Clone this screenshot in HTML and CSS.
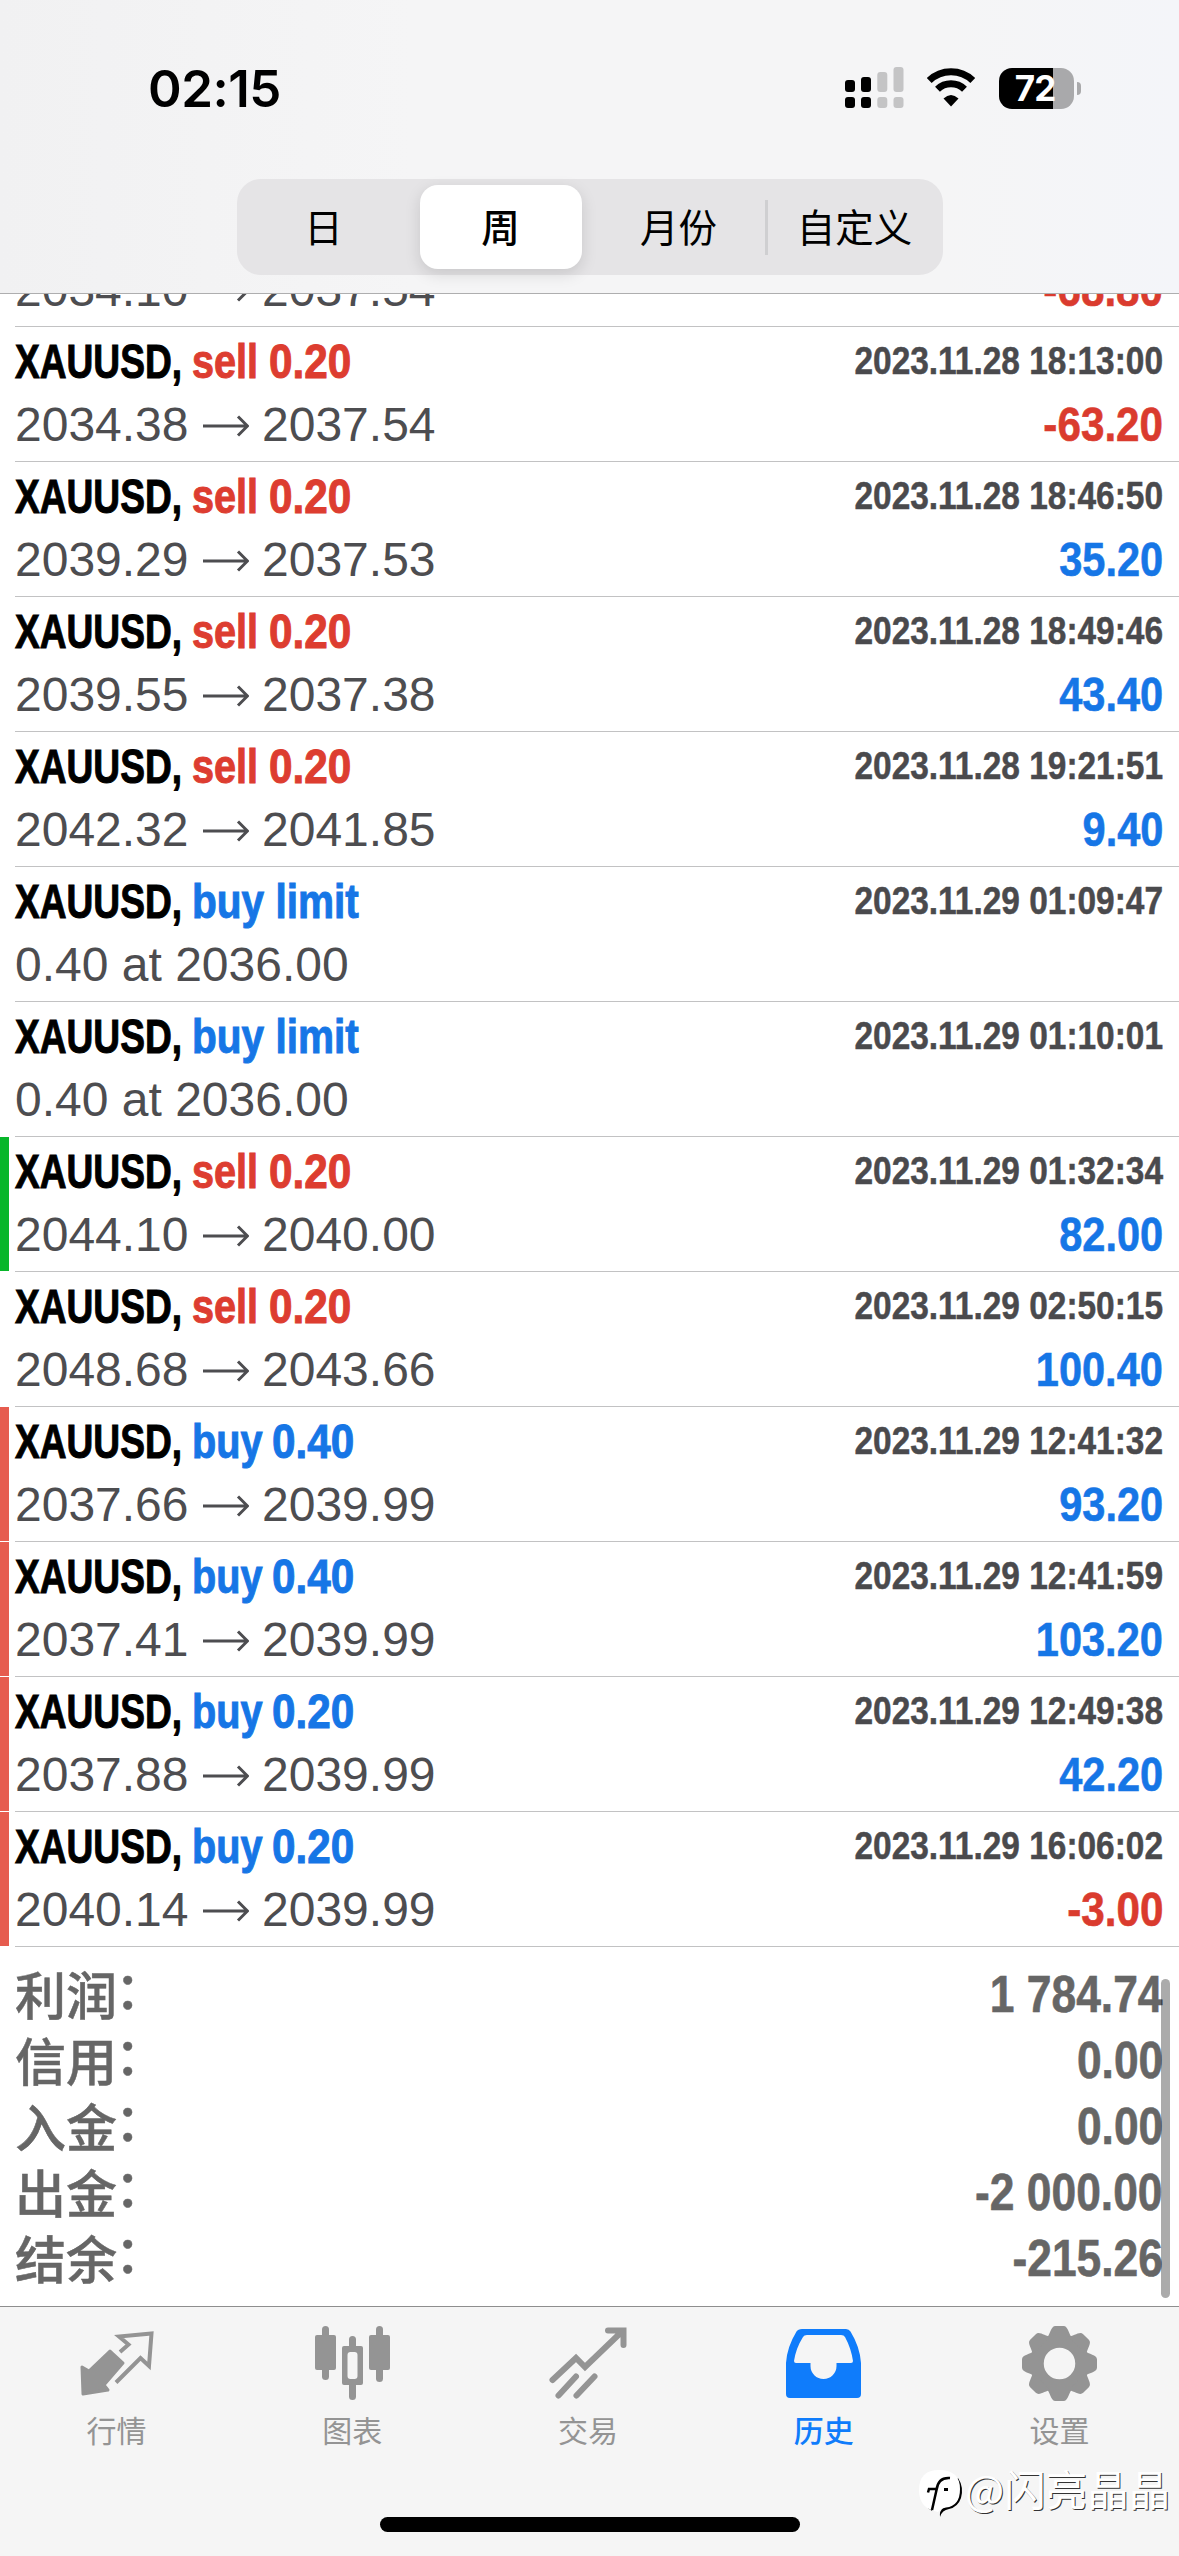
FILE: index.html
```html
<!DOCTYPE html>
<html lang="zh-CN">
<head>
<meta charset="utf-8">
<title>历史</title>
<link rel="stylesheet" href="styles.css">
</head>
<body>
<div class="screen">
  <header class="header">
    <div class="status">
      <span class="clock">02:15</span>
      <span class="status-icons">
        <svg class="signal" width="59" height="42" viewBox="0 0 59 42">
          <g fill="#000"><rect x="0" y="13" width="10" height="12" rx="3"/><rect x="16" y="10" width="10" height="15" rx="3"/><rect x="0" y="30" width="10" height="11" rx="3"/><rect x="16" y="30" width="10" height="11" rx="3"/></g>
          <g fill="#c4c4c5"><rect x="32.300" y="5" width="10" height="20" rx="3"/><rect x="48.500" y="0" width="10" height="25" rx="3"/><rect x="32.300" y="30" width="10" height="11" rx="3"/><rect x="48.500" y="30" width="10" height="11" rx="3"/></g>
        </svg>
        <svg class="wifi" width="50" height="42" viewBox="0 0 50 42">
          <path d="M3.200 13.500A31.500 31.500 0 0 1 46.800 13.500M11.500 22.300A19.500 19.500 0 0 1 38.500 22.300" fill="none" stroke="#000" stroke-width="7"/>
          <path d="M25 39.500L17.500 31.500Q25 24.500 32.500 31.500Z"/>
        </svg>
        <span class="battery"><span class="battery-level">72</span></span><span class="battery-nub"></span>
      </span>
    </div>
    <nav class="segments">
      <span class="segment day">日</span>
      <span class="segment selected">周</span>
      <span class="segment month">月份</span>
      <span class="segment divided">自定义</span>
    </nav>
  </header>

  <main class="history">
    <section class="deal partial"><i class="mark"></i><div class="info"><span class="prices">2034.10<svg class="arrow" viewBox="0 0 46 22"><path d="M0 11H44M35 1.500L44.500 11L35 20.500"/></svg>2037.54</span><span class="profit loss">-68.80</span></div></section>
    <section class="deal"><i class="mark"></i><div class="info"><span class="title"><b class="symbol">XAUUSD,</b><b class="side sell">sell</b><b class="volume sell">0.20</b></span><time>2023.11.28 18:13:00</time><span class="prices">2034.38<svg class="arrow" viewBox="0 0 46 22"><path d="M0 11H44M35 1.500L44.500 11L35 20.500"/></svg>2037.54</span><span class="profit loss">-63.20</span></div></section>
    <section class="deal"><i class="mark"></i><div class="info"><span class="title"><b class="symbol">XAUUSD,</b><b class="side sell">sell</b><b class="volume sell">0.20</b></span><time>2023.11.28 18:46:50</time><span class="prices">2039.29<svg class="arrow" viewBox="0 0 46 22"><path d="M0 11H44M35 1.500L44.500 11L35 20.500"/></svg>2037.53</span><span class="profit">35.20</span></div></section>
    <section class="deal"><i class="mark"></i><div class="info"><span class="title"><b class="symbol">XAUUSD,</b><b class="side sell">sell</b><b class="volume sell">0.20</b></span><time>2023.11.28 18:49:46</time><span class="prices">2039.55<svg class="arrow" viewBox="0 0 46 22"><path d="M0 11H44M35 1.500L44.500 11L35 20.500"/></svg>2037.38</span><span class="profit">43.40</span></div></section>
    <section class="deal"><i class="mark"></i><div class="info"><span class="title"><b class="symbol">XAUUSD,</b><b class="side sell">sell</b><b class="volume sell">0.20</b></span><time>2023.11.28 19:21:51</time><span class="prices">2042.32<svg class="arrow" viewBox="0 0 46 22"><path d="M0 11H44M35 1.500L44.500 11L35 20.500"/></svg>2041.85</span><span class="profit">9.40</span></div></section>
    <section class="deal"><i class="mark"></i><div class="info"><span class="title"><b class="symbol">XAUUSD,</b><b class="side pending buy">buy limit</b></span><time>2023.11.29 01:09:47</time><span class="prices">0.40 at 2036.00</span></div></section>
    <section class="deal"><i class="mark"></i><div class="info"><span class="title"><b class="symbol">XAUUSD,</b><b class="side pending buy">buy limit</b></span><time>2023.11.29 01:10:01</time><span class="prices">0.40 at 2036.00</span></div></section>
    <section class="deal"><i class="mark take"></i><div class="info"><span class="title"><b class="symbol">XAUUSD,</b><b class="side sell">sell</b><b class="volume sell">0.20</b></span><time>2023.11.29 01:32:34</time><span class="prices">2044.10<svg class="arrow" viewBox="0 0 46 22"><path d="M0 11H44M35 1.500L44.500 11L35 20.500"/></svg>2040.00</span><span class="profit">82.00</span></div></section>
    <section class="deal"><i class="mark"></i><div class="info"><span class="title"><b class="symbol">XAUUSD,</b><b class="side sell">sell</b><b class="volume sell">0.20</b></span><time>2023.11.29 02:50:15</time><span class="prices">2048.68<svg class="arrow" viewBox="0 0 46 22"><path d="M0 11H44M35 1.500L44.500 11L35 20.500"/></svg>2043.66</span><span class="profit">100.40</span></div></section>
    <section class="deal"><i class="mark stop"></i><div class="info"><span class="title"><b class="symbol">XAUUSD,</b><b class="side buy">buy</b><b class="volume buy">0.40</b></span><time>2023.11.29 12:41:32</time><span class="prices">2037.66<svg class="arrow" viewBox="0 0 46 22"><path d="M0 11H44M35 1.500L44.500 11L35 20.500"/></svg>2039.99</span><span class="profit">93.20</span></div></section>
    <section class="deal"><i class="mark stop"></i><div class="info"><span class="title"><b class="symbol">XAUUSD,</b><b class="side buy">buy</b><b class="volume buy">0.40</b></span><time>2023.11.29 12:41:59</time><span class="prices">2037.41<svg class="arrow" viewBox="0 0 46 22"><path d="M0 11H44M35 1.500L44.500 11L35 20.500"/></svg>2039.99</span><span class="profit">103.20</span></div></section>
    <section class="deal"><i class="mark stop"></i><div class="info"><span class="title"><b class="symbol">XAUUSD,</b><b class="side buy">buy</b><b class="volume buy">0.20</b></span><time>2023.11.29 12:49:38</time><span class="prices">2037.88<svg class="arrow" viewBox="0 0 46 22"><path d="M0 11H44M35 1.500L44.500 11L35 20.500"/></svg>2039.99</span><span class="profit">42.20</span></div></section>
    <section class="deal"><i class="mark stop"></i><div class="info"><span class="title"><b class="symbol">XAUUSD,</b><b class="side buy">buy</b><b class="volume buy">0.20</b></span><time>2023.11.29 16:06:02</time><span class="prices">2040.14<svg class="arrow" viewBox="0 0 46 22"><path d="M0 11H44M35 1.500L44.500 11L35 20.500"/></svg>2039.99</span><span class="profit loss">-3.00</span></div></section>

    <dl class="totals">
      <dt>利润<span class="colon">：</span></dt><dd>1 784.74</dd>
      <dt>信用<span class="colon">：</span></dt><dd>0.00</dd>
      <dt>入金<span class="colon">：</span></dt><dd>0.00</dd>
      <dt>出金<span class="colon">：</span></dt><dd>-2 000.00</dd>
      <dt>结余<span class="colon">：</span></dt><dd>-215.26</dd>
    </dl>
    <i class="scrollbar"></i>
  </main>

  <footer class="tabbar">
    <nav class="tabs">
      <a class="tab">
        <svg viewBox="0 0 84 84"><path d="M6 47L13 51L34 31L47 43L28 65L32 70L7 74Z" fill="currentColor" stroke="currentColor" stroke-width="3" stroke-linejoin="round"/><path d="M44 32L52.500 24.500L43 16.500L75.500 13.500L73 46L64.500 38L40 62.500" fill="none" stroke="currentColor" stroke-width="4"/></svg>
        <span>行情</span>
      </a>
      <a class="tab">
        <svg viewBox="0 0 84 84" fill="currentColor"><rect x="3" y="15" width="21" height="35" rx="2"/><rect x="10" y="6" width="7" height="54" rx="3.500"/><rect x="57" y="15" width="21" height="35" rx="2"/><rect x="64" y="6" width="7" height="56" rx="3.500"/><path d="M37 26V19.500a3.500 3.500 0 0 1 7 0V26H49a2 2 0 0 1 2 2V63a2 2 0 0 1-2 2H44V76.500a3.500 3.500 0 0 1-7 0V65H32a2 2 0 0 1-2-2V28a2 2 0 0 1 2-2ZM38.500 32a3 3 0 0 0-3 3V56a3 3 0 0 0 3 3h4a3 3 0 0 0 3-3V35a3 3 0 0 0-3-3Z" fill-rule="evenodd"/></svg>
        <span>图表</span>
      </a>
      <a class="tab">
        <svg viewBox="0 0 84 84"><path d="M6 60L29.500 38L38.500 47L76 11M61.500 10.500H77V25M29.500 56.500L12 75.500M48 56.500L30 75.500" transform="translate(-.5 0)" fill="none" stroke="currentColor" stroke-width="6" stroke-linecap="round"/></svg>
        <span>交易</span>
      </a>
      <a class="tab active">
        <svg viewBox="0 0 84 84" fill="currentColor"><path fill-rule="evenodd" d="M19 9H63Q66 9 67.500 11.500Q77 27 78 43V74Q78 78 74 78H7Q3 78 3 74V43Q4 27 13.500 11.500Q15 9 19 9ZM24 15Q21 15 20 17Q13 28 11 41Q11 43 13 43H27.500V46A13 13 0 0 0 53.500 46V43H68Q70 43 70 41Q68 28 62 17Q61 15 58 15Z"/></svg>
        <span>历史</span>
      </a>
      <a class="tab">
        <svg viewBox="0 0 84 84" fill="currentColor"><defs><path id="tooth" d="M-13-25C-9-29-9-37.500-4-37.500H4C9-37.500 9-29 13-25Z"/></defs><g transform="translate(40.500 43.500)"><circle r="22.500" fill="none" stroke="currentColor" stroke-width="13.500"/><use href="#tooth"/><use href="#tooth" transform="rotate(45)"/><use href="#tooth" transform="rotate(90)"/><use href="#tooth" transform="rotate(135)"/><use href="#tooth" transform="rotate(180)"/><use href="#tooth" transform="rotate(225)"/><use href="#tooth" transform="rotate(270)"/><use href="#tooth" transform="rotate(315)"/></g></svg>
        <span>设置</span>
      </a>
    </nav>
    <i class="home"></i>
  </footer>

  <div class="watermark">
    <svg width="46" height="50" viewBox="0 0 46 50"><path d="M40 9Q46 18 43 29Q40 38 31 40Q24 41 22 48Q21 42 26 38Z"/><path d="M11 24L17 22L14 42L10 39Z"/><path d="M21 1Q42 1 42 20Q42 37 28 38.500Q22 39.500 20 43L13 41Q1 36 1 21Q1 1 21 1Z" fill="#fff"/><path d="M32 9Q20 8 18.500 21L14 41M10 23.500L11 20H18" fill="none" stroke="#000" stroke-width="2.500"/><rect x="26" y="19" width="4" height="3"/></svg>
    <span>@闪亮晶晶</span>
  </div>
</div>
</body>
</html>
```
FILE: styles.css
```css
* { box-sizing: border-box; }
body { margin: 0; background: #fff; font-family: "Liberation Sans", "Noto Sans CJK SC", sans-serif; }
i, b { font-style: normal; }
.screen { position: relative; width: 1179px; height: 2556px; display: flex; flex-direction: column; overflow: hidden; }

.header { height: 294px; flex: none; border-bottom: 1px solid #aeaeaf; background: linear-gradient(90deg, #f1f1f2, #f5f5f6 35%, #f5f5f6 80%, #f4f5f9); }
.status { height: 179px; padding: 67px 98px 0 148px; display: flex; justify-content: space-between; align-items: flex-start; }
.clock { font: 600 51px/43px Inter, sans-serif; letter-spacing: -0.5px; }
.status-icons { display: flex; height: 42px; align-items: center; }
.wifi { margin: 0 23px 0 22px; }
.battery { width: 75px; height: 41px; border-radius: 13px; background: linear-gradient(90deg, #000 54px, #a9a9ab 54px); display: flex; justify-content: center; }
.battery-level { margin-right: 3px; color: #fff; font: 700 35px/41px Inter, sans-serif; letter-spacing: -1px; }
.battery-nub { width: 4px; height: 13px; margin-left: 3px; border-radius: 0 4px 4px 0; background: #a9a9ab; }

.segments { width: 706px; height: 96px; margin-left: 236.500px; padding: 6px 7px; border-radius: 24px; background: #e5e4e6; display: grid; grid-template-columns: 176px 162px 183px 1fr; font: 38.500px/81px "Noto Sans CJK SC", sans-serif; text-align: center; }
.segment { display: block; }
.segment.day { padding-right: 16px; }
.segment.month { padding-left: 11px; }
.segment.selected { height: 84px; border-radius: 18px; background: #fff; font-weight: 500; box-shadow: 0 5px 16px rgba(0, 0, 0, .13); }
.segment.divided { padding-left: 9px; background: linear-gradient(#cfcfd1, #cfcfd1) 0 15px / 3px 55px no-repeat; }

.history { position: relative; height: 2012px; flex: none; }
.deal { height: 135px; display: flex; gap: 6px; }
.mark { width: 9px; height: 134px; flex: none; }
.mark.take { background: #08b62a; }
.mark.stop { background: #e65c4f; }
.info { flex: 1; padding: 3px 16px 0 0; border-bottom: 1px solid #c2c2c3; display: grid; grid-template-columns: 1fr auto; grid-template-rows: 63px 63px; font-size: 48px; line-height: 63px; white-space: nowrap; }
.deal.partial { height: 33px; overflow: hidden; align-items: flex-end; }
.partial .info { grid-template-rows: 63px; height: 72px; padding-top: 3px; }
.title { display: flex; -webkit-text-stroke: 1px currentColor; }
.title b { transform-origin: 0 0; }
.symbol { width: 177px; transform: scaleX(.773); }
.side { transform: scaleX(.825); }
.side.sell { width: 77px; }
.side.buy { width: 80px; }
.side.pending { transform: scaleX(.845); }
.volume { transform: scaleX(.88); }
.sell { color: #dd3d30; }
.buy { color: #1676e6; }
time { justify-self: end; color: #4a4a4d; font-size: 39px; font-weight: 700; line-height: 61px; -webkit-text-stroke: .5px currentColor; transform: scaleX(.857); transform-origin: 100% 0; }
.prices { color: #4d4d50; }
.arrow { width: 46px; height: 22px; margin: 0 13.500px 4px 14px; fill: none; stroke: currentColor; stroke-width: 3; }
.profit { justify-self: end; color: #1676e6; font-weight: 700; -webkit-text-stroke: .6px currentColor; transform: scaleX(.865); transform-origin: 100% 0; }
.profit.loss { color: #da3b2e; transform: scaleX(.88); }

.totals { margin: 0; padding: 15px 16px 0 15px; display: grid; grid-template-columns: 1fr auto; grid-auto-rows: 66px; color: #666; font-weight: 700; font-size: 51px; line-height: 66px; }
.totals dt { font: 500 51px/62px "Noto Sans CJK SC", sans-serif; -webkit-text-stroke: .5px currentColor; }
.totals .colon { display: inline-block; height: 62px; transform: translate(-2px, -6px); }
.totals dd { margin: 0; justify-self: end; -webkit-text-stroke: .6px currentColor; transform: scaleX(.87); transform-origin: 100% 0; }
.scrollbar { position: absolute; right: 9px; bottom: 8px; width: 9px; height: 319px; border-radius: 5px; background: rgba(0, 0, 0, .33); }

.tabbar { height: 250px; border-top: 1px solid #8e8e8e; background: #f5f5f5; display: flex; flex-direction: column; align-items: center; }
.tabs { width: 100%; height: 210px; padding-top: 13px; display: grid; grid-template-columns: repeat(5, 1fr); }
.tab { display: flex; flex-direction: column; align-items: center; color: #949494; font: 30px/44px "Noto Sans CJK SC", sans-serif; }
.tab svg { width: 84px; height: 84px; margin-bottom: 3px; }
.tab span { margin-right: 3px; }
.tab.active { color: #0f7cfb; }
.tab.active span { font-weight: 500; }
.home { width: 420px; height: 15px; border-radius: 8px; background: #000; }

.watermark { position: absolute; left: 918px; top: 2469px; display: flex; align-items: flex-start; gap: 1px; color: #fff; font: 41.500px/38px "Noto Sans CJK SC", sans-serif; text-shadow: 1px 1px 0 #333; white-space: nowrap; }
```
